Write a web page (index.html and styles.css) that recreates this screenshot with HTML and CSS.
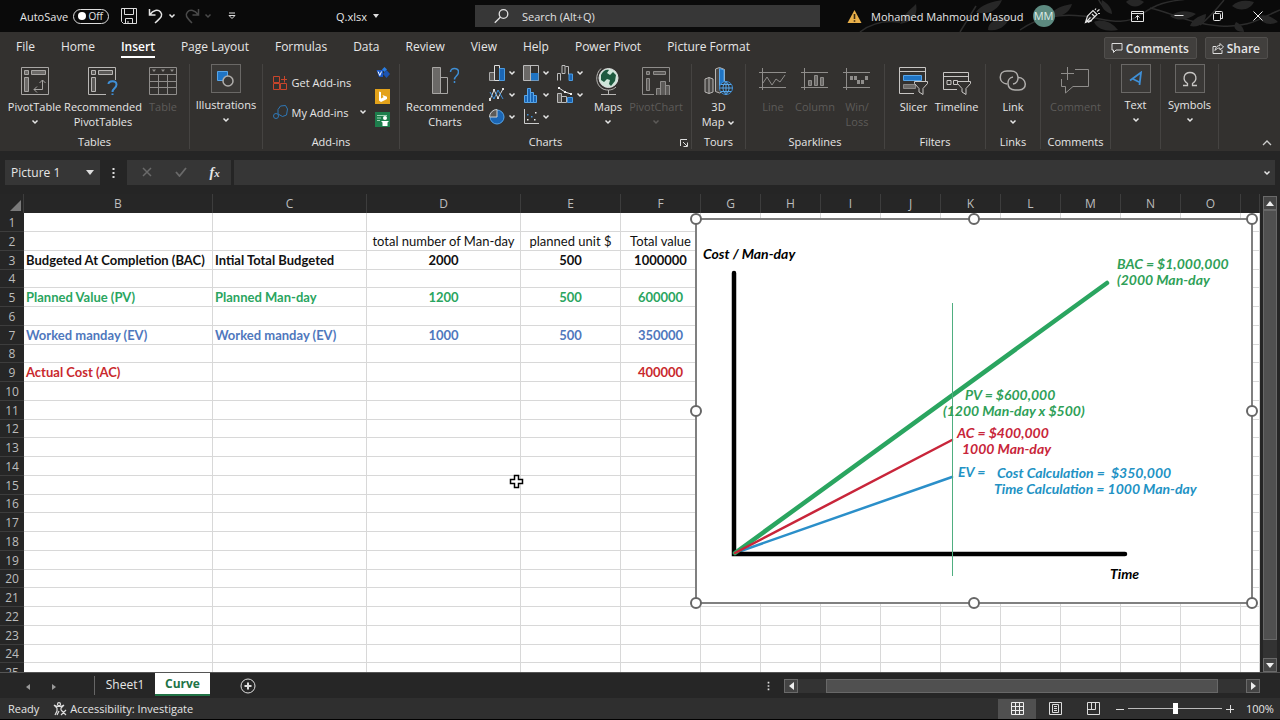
FILE: index.html
```html
<!DOCTYPE html>
<html lang="en">
<head>
    <meta charset="UTF-8">
    <meta name="viewport" content="width=device-width, initial-scale=1.0">
    <title>Q.xlsx - Excel</title>
    <link rel="stylesheet" href="styles.css">
</head>
<body>
    <svg class="defs" aria-hidden="true">
        <symbol id="chev" viewBox="0 0 8 6"><path d="M1.500 1.500 4 4l2.500-2.500" fill="none" stroke="currentColor" stroke-width="1.500"/></symbol>
        <symbol id="funnel" viewBox="0 0 14 14"><path d="M.5.5h13v2L9 7.500v6L5 11V7.500L.5 2.500z" fill="#33312f" stroke="#c8c6c4"/></symbol>
    </svg>

    <header class="titlebar">
        <svg class="foliage" viewBox="0 0 440 32" aria-hidden="true">
            <g fill="none" stroke="#2c2c2c" stroke-width="1.500">
                <path d="M180 30c20-14 40-16 62-14s40 12 60-2 30-12 50-16M270 12c-6-4-10-8-12-14M310 8c20 4 40 16 70 18s40-8 60-16"/>
                <path d="M360 25c10-8 20-20 24-25M20 32c10-8 24-12 40-10M120 32l16-26"/>
            </g>
            <g fill="#272727">
                <path d="M60 24c4-10 10-14 16-20 2 10-2 18-16 20zM136 12c6-8 16-10 26-12-4 10-14 16-26 12zM148 30c0-8 8-12 22-14-2 8-10 16-22 14zM210 16c4-8 12-10 22-12-2 8-10 14-22 12zM254 22c8-4 18 0 24 8-10 2-20 0-24-8z"/>
                <path d="M262 0c6 4 10 8 10 14-8-2-12-8-10-14zM286 2c4-4 12-4 18 0-6 6-12 6-18 0zM330 16c8-6 18-6 26-2-8 6-18 8-26 2zM350 26c2-6 8-10 16-12 0 8-6 14-16 12zM392 6c6-6 14-6 22-4-4 8-14 10-22 4zM396 22c4 2 8 6 8 10-8 0-12-4-8-10zM418 16c6-2 14 0 20 6-8 4-16 2-20-6z"/>
            </g>
        </svg>
        <div class="title-left">
            <label class="autosave"><span>AutoSave</span><input type="checkbox"><span class="toggle"><i></i>Off</span></label>
            <button class="t-btn" aria-label="Save"><svg width="16" height="16" viewBox="0 0 16 16" fill="none" stroke="#ddd"><path d="M.5.5h15v15H2.500l-2-2zM3.500.5v6h9v-6M4.500 15.500v-5h7v5M7 13v2"/></svg></button>
            <button class="t-btn undo" aria-label="Undo"><svg width="16" height="16" viewBox="0 0 16 16" fill="none" stroke="#e4e4e4" stroke-width="1.500"><path d="M1.500 1v6h6M2 6.500C5 2 10 1 12.500 4s1.500 5-5.500 11"/></svg><svg class="chev"><use href="#chev"/></svg></button>
            <button class="t-btn redo" aria-label="Redo" disabled><svg width="16" height="16" viewBox="0 0 16 16" fill="none" stroke="#4a4a4a" stroke-width="1.500"><path d="M14.500 1v6h-6M14 6.500C11 2 6 1 3.500 4s-1.500 5 4.500 11"/></svg><svg class="chev"><use href="#chev"/></svg></button>
            <button class="t-btn" aria-label="Customize Quick Access Toolbar"><svg width="8" height="8" viewBox="0 0 8 8"><path d="M1 1h6" stroke="#ddd"/><path d="M1 3.500h6l-3 3z" fill="none" stroke="#ddd"/></svg></button>
            <button class="file-name">Q.xlsx <svg width="6" height="4" viewBox="0 0 6 4"><path d="M0 0h6L3 4z" fill="#ddd"/></svg></button>
        </div>
        <div class="search">
            <svg width="15" height="15" viewBox="0 0 15 15" fill="none" stroke="#e0e0e0" stroke-width="1.300"><circle cx="9.500" cy="5" r="4.300"/><path d="M6.500 8 .8 13.800"/></svg>
            <input type="text" placeholder="Search (Alt+Q)" aria-label="Search">
        </div>
        <div class="title-right">
            <div class="account">
                <svg width="15" height="15" viewBox="0 0 15 15"><path d="M7.500 1 14.500 14H.5z" fill="#e9b04a"/><path d="M7.500 5v5M7.500 11.200v1.500" stroke="#3a2a10" stroke-width="1.600"/></svg>
                <span>Mohamed Mahmoud Masoud</span>
                <span class="avatar">MM</span>
            </div>
            <button class="t-btn" aria-label="Pen"><svg width="17" height="16" viewBox="0 0 17 16" fill="none" stroke="#e4e4e4" stroke-width="1.200"><path d="M1.500 14.500 3.500 8 9 2.500l4 4L7.500 12zM1.500 14.500l5-5M8 6l3 3M11 2l1-1.500M13 3.500l2.500-2M14 5.500h2M4 14.500l4-2"/></svg></button>
            <button class="t-btn" aria-label="Ribbon Display Options"><svg width="13" height="11" viewBox="0 0 13 11" fill="none" stroke="#e4e4e4"><path d="M.5.5h12v10H.5zM.5 2.500h12M6.500 9V4.500M4.500 6.500l2-2 2 2"/></svg></button>
            <button class="t-btn" aria-label="Minimize"><svg width="10" height="10" viewBox="0 0 10 10"><path d="M.5 4.500h9" stroke="#e4e4e4"/></svg></button>
            <button class="t-btn" aria-label="Restore Down"><svg width="10" height="10" viewBox="0 0 10 10" fill="none" stroke="#e4e4e4"><rect x=".5" y="2.500" width="7" height="7" rx="1"/><path d="M2.500 2.500V.5h6q1 0 1 1v6h-2"/></svg></button>
            <button class="t-btn" aria-label="Close"><svg width="10" height="10" viewBox="0 0 10 10"><path d="m.5.5 9 9m0-9-9 9" stroke="#f0f0f0"/></svg></button>
        </div>
    </header>

    <nav class="tabs">
        <a href="#">File</a>
        <a href="#">Home</a>
        <a href="#" class="active">Insert</a>
        <a href="#">Page Layout</a>
        <a href="#">Formulas</a>
        <a href="#">Data</a>
        <a href="#">Review</a>
        <a href="#">View</a>
        <a href="#">Help</a>
        <a href="#">Power Pivot</a>
        <a href="#">Picture Format</a>
        <div class="tab-actions">
            <button><svg width="12" height="12" viewBox="0 0 12 12" fill="none" stroke="#ddd"><path d="M1 1.500h10v6.500H5L2.500 10.500V8H1z"/></svg>Comments</button>
            <button><svg width="12" height="12" viewBox="0 0 12 12" fill="none" stroke="#ddd"><path d="M4 4.500H1v7h9V8M3 8.500C3.500 5 5.500 3.500 8 3.500v-2L11.500 5 8 8V6C6 6 4.500 6.500 3 8.500z"/></svg>Share</button>
        </div>
    </nav>

    <section class="ribbon">
        <div class="group g-tables">
            <div class="tools">
                <button class="big b-pivot">
                    <svg width="28" height="28" viewBox="0 0 28 28" fill="none" stroke="#a8a6a4"><path d="M.5.5h27v27H.5z"/><path d="M3.500 3.500h4v4h-4zM10.500 3.500h14v4h-14zM3.500 10.500h4v14h-4z" fill="#6b6967"/><path d="M13 22.500h8.500V13M16 19.500l-3 3 3 3M18.500 16l3-3 3 3"/></svg>
                    <span>PivotTable</span><svg class="chev"><use href="#chev"/></svg>
                </button>
                <button class="big b-rec">
                    <svg width="30" height="28" viewBox="0 0 30 28" fill="none" stroke="#b8b6b4"><path d="M18 27.500H.5V.5h27V13"/><path d="M3.500 3.500h4v4h-4zM10.500 3.500h14v4h-14zM3.500 10.500h4v14h-4z" fill="#5a5856"/><path d="M20.500 17c0-3 8-4.500 8 .5 0 4-4 3.500-4 7.500M24.500 26.500V28" stroke="#3f8fd6" stroke-width="2"/></svg>
                    <span>Recommended<br>PivotTables</span>
                </button>
                <button class="big b-table" disabled>
                    <svg width="28" height="28" viewBox="0 0 28 28" fill="none" stroke="#8f8d8b"><path d="M.5.5h27v27H.5zM.5 7.500h27M.5 14.500h27M.5 20.500h27M9.500 7.500v20M18.500 7.500v20"/><path d="M3 2.500h4L5 5zM12 2.500h4L14 5zM21 2.500h4L23 5z" fill="#8f8d8b" stroke="none"/></svg>
                    <span>Table</span>
                </button>
            </div>
            <h2>Tables</h2>
        </div>
        <div class="group g-illus">
            <div class="tools">
                <button class="big boxed">
                    <span class="box"><svg width="17" height="17" viewBox="0 0 17 17"><path d="M.5 1.500h10v9H.5z" fill="#1f74c4" stroke="#57a5e8"/><circle cx="11" cy="11" r="5" fill="#3a3836" stroke="#b0aeac" stroke-width="1.500"/></svg></span>
                    <span>Illustrations</span><svg class="chev"><use href="#chev"/></svg>
                </button>
            </div>
        </div>
        <div class="group g-addins">
            <div class="tools">
                <div class="addin-list">
                    <button><svg width="15" height="15" viewBox="0 0 15 15" fill="none" stroke="#c8452b"><path d="M.5 1.500h6v6h-6zM.5 8.500h6v6h-6zM7.500 8.500h6v6h-6zM8 4.500h6M11.500 1v6.500"/></svg>Get Add-ins</button>
                    <button><svg width="15" height="15" viewBox="0 0 15 15" fill="none" stroke="#2f78b7"><path d="M5 4.500 7.500 1l5-.5 2 3.500-1 6-4 1.500L5 9z"/><circle cx="3" cy="11" r="2.500"/></svg>My Add-ins<svg class="chev"><use href="#chev"/></svg></button>
                </div>
                <div class="mini-list">
                    <button aria-label="Visio Data Visualizer"><svg width="15" height="15" viewBox="0 0 15 15"><path d="M7 3.500 9.500 1 12 3.500 9.500 6z" fill="#2a7de1"/><path d="M8 8l3.500-4L15 8l-3.500 4z" fill="#1c54b2"/><path d="M1.500 4H8v7H4z" fill="#1a58c8"/><path d="m3 5.500 1.800 4L6.500 5.500" fill="none" stroke="#fff"/></svg></button>
                    <button aria-label="Bing Maps"><svg width="15" height="15" viewBox="0 0 15 15"><path d="M0 0h15v15H0z" fill="#e3a21a"/><path d="M4 2.500 6 3.200v6.300l2.500-1.300L7.500 6l4.500 1.700v2.300L6 13l-2-1.500z" fill="#fff"/></svg></button>
                    <button aria-label="People Graph"><svg width="15" height="15" viewBox="0 0 15 15"><path d="M0 0h15v15H0z" fill="#1d7e4c"/><path d="M2 3.500h10M2 6h4M2 8.500h3" stroke="#9fd3b5"/><circle cx="10" cy="6" r="2" fill="#fff"/><path d="M6 9h8l-1.500 1.500V14H7.500v-3.500z" fill="#fff"/></svg></button>
                </div>
            </div>
            <h2>Add-ins</h2>
        </div>
        <div class="group g-charts">
            <div class="tools">
                <button class="big b-recchart">
                    <svg width="28" height="28" viewBox="0 0 28 28" fill="none" stroke="#a8a6a4"><path d="M1.500.5h8v26h-8z" fill="#6b6967"/><path d="M9.500 10.500h7v16h-7z"/><path d="M19.500 5c0-5 8-4.500 8 0 0 4-4 4-4 7.500M23.500 14v2" stroke="#3f8fd6" stroke-width="1.500"/></svg>
                    <span>Recommended<br>Charts</span>
                </button>
                <div class="chart-grid">
                    <button aria-label="Column or Bar Chart"><svg width="16" height="16" viewBox="0 0 16 16"><path d="M.5 7.500h5v8h-5z" fill="#5c5a58" stroke="#aaa"/><path d="M5.500.5h5v15h-5z" fill="none" stroke="#ddd"/><path d="M10.500 3.500h5v12h-5z" fill="#1b66b5" stroke="#4a9ae0"/></svg><svg class="chev"><use href="#chev"/></svg></button>
                    <button aria-label="Hierarchy Chart"><svg width="16" height="16" viewBox="0 0 16 16"><path d="M.5.500h15v15H.5z" fill="none" stroke="#bbb"/><path d="M1 1h6v14H1z" fill="#6b6967"/><path d="M7.500.500v15" stroke="#bbb"/><path d="M8 8h7.500v7.500H8z" fill="#1f74c4"/></svg><svg class="chev"><use href="#chev"/></svg></button>
                    <button aria-label="Waterfall Chart"><svg width="16" height="16" viewBox="0 0 16 16" fill="none" stroke="#bbb"><path d="M.5 15.500v-7h3v7M5 8.500v-8h3v8zM8.500 1.500h3v8"/><path d="M12 9h3.500v6.500H12z" fill="#1b66b5" stroke="#4a9ae0"/></svg><svg class="chev"><use href="#chev"/></svg></button>
                    <button aria-label="Line Chart"><svg width="16" height="16" viewBox="0 0 16 16" fill="none"><path d="m1 13 4-10 4 8 5-9" stroke="#ddd"/><path d="m1 5 4 7 4-9 5 9" stroke="#3f8fd6"/><path d="M0 11h2v3H0zM4 2h2v2H4zM8 10h2v2H8zM13 1h2v2h-2z" fill="#ddd"/></svg><svg class="chev"><use href="#chev"/></svg></button>
                    <button aria-label="Statistic Chart"><svg width="16" height="16" viewBox="0 0 16 16" fill="#1b66b5" stroke="#57a5e8"><path d="M1.500 8.500h3v7h-3zM4.500 1.500h3v14h-3zM7.500 5.500h3v10h-3zM10.500 8.500h3v7h-3z"/></svg><svg class="chev"><use href="#chev"/></svg></button>
                    <button aria-label="Combo Chart"><svg width="16" height="16" viewBox="0 0 16 16" fill="none" stroke="#bbb"><path d="M.5 6.500h4v9h-4z" fill="#5c5a58"/><path d="M4.500 9.500h5v6h-5z"/><path d="M10.500 10.500h5v5h-5z" fill="#1b66b5" stroke="#4a9ae0"/><path d="m2 1 6 4 6 2" stroke="#eee"/><path d="M1 0h2v2H1zM7 4h2v2H7zM13 6h2v2h-2z" fill="#eee" stroke="none"/></svg><svg class="chev"><use href="#chev"/></svg></button>
                    <button aria-label="Pie Chart"><svg width="16" height="16" viewBox="0 0 16 16"><circle cx="8" cy="8" r="7" fill="#1b66b5" stroke="#57a5e8"/><path d="M8 8V.5A7.500 7.500 0 0 0 .5 8z" fill="#5c5a58" stroke="#ccc"/></svg><svg class="chev"><use href="#chev"/></svg></button>
                    <button aria-label="Scatter Chart"><svg width="16" height="16" viewBox="0 0 16 16"><path d="M1.500 0v14.500H16" fill="none" stroke="#ccc"/><path d="M4 10h1.500v1.500H4zM11 10h1.500v1.500H11zM12 3h1.500v1.500H12z" fill="#eee"/><path d="M4 5h1.500v1.500H4zM8 7h1.500v1.500H8z" fill="#3f8fd6"/></svg><svg class="chev"><use href="#chev"/></svg></button>
                </div>
                <button class="big b-maps">
                    <svg width="24" height="28" viewBox="0 0 24 28" fill="none" stroke="#b8b6b4"><circle cx="12.500" cy="11" r="9.500" fill="#cfe6da" stroke="#e0e0e0"/><path d="M5 8c2-5 6-6 8-5l-2 3 3 2 3-3 3 3-1 6-4 5-2-2 1-4-3-1-3 3-3-2z" fill="#1e5a3f" stroke="none"/><path d="M5 1.500C-1 7-1 18 7 22c5 2 10 1 13-2M12.500 23v4M5 27.500h15"/></svg>
                    <span>Maps</span><svg class="chev"><use href="#chev"/></svg>
                </button>
                <button class="big b-pchart" disabled>
                    <svg width="28" height="28" viewBox="0 0 28 28" fill="none" stroke="#8f8d8b"><path d="M12 27.500H.5V.5h27V15"/><path d="M4.500 4.500h3v3h-3zM11.500 4.500h12v3h-12zM4.500 11.500h3v12h-3z" fill="#5c5a58"/><path d="M14.500 21.500h4v7h-4zM18.500 14.500h5v14h-5zM23.500 18.500h4v10h-4z" fill="#5c5a58"/></svg>
                    <span>PivotChart</span><svg class="chev"><use href="#chev"/></svg>
                </button>
            </div>
            <h2>Charts</h2>
            <button class="launcher" aria-label="Charts options"><svg width="8" height="8" viewBox="0 0 8 8" fill="none" stroke="#ddd"><path d="M.5 7V.5H7M3 3l4 4M7.500 3.500v4h-4"/></svg></button>
        </div>
        <div class="group g-tours">
            <div class="tools">
                <button class="big">
                    <svg width="30" height="28" viewBox="0 0 30 28" fill="none" stroke="#b8b6b4"><path d="m1 12 4-1.500 4 1.500v13l-4 1.500L1 25zM5 10.500v16" fill="#4a4846"/><path d="m11.500 2 4-1.500 5 2V24l-5 2-4-1.500z" fill="#4a4846"/><path d="M15.500 1.500 20 3v14l-4.500 3z" fill="#1f74c4" stroke="#57a5e8"/><circle cx="22" cy="21" r="6.500" fill="#2d2c2a" stroke="#3f8fd6"/><path d="M15.500 21h13M22 14.500v13M17 17.500h10M17 24.500h10M22 14.500c-4 3-4 10 0 13M22 14.500c4 3 4 10 0 13" stroke="#57a5e8"/></svg>
                    <span>3D<br>Map <svg class="chev"><use href="#chev"/></svg></span>
                </button>
            </div>
            <h2>Tours</h2>
        </div>
        <div class="group g-spark">
            <div class="tools">
                <button class="big" disabled>
                    <svg width="28" height="28" viewBox="0 0 28 28" fill="none" stroke="#8f8d8b"><path d="M0 5.500h27M0 20.500h27M3.500 1v22M4 16l4-6 5 8 4-6 4 3 5-7"/></svg>
                    <span>Line</span>
                </button>
                <button class="big" disabled>
                    <svg width="28" height="28" viewBox="0 0 28 28" fill="none" stroke="#8f8d8b"><path d="M0 5.500h27M0 20.500h27M3.500 1v22"/><path d="M7.500 13.500h3v5h-3zM13.500 8.500h3v10h-3zM19.500 10.500h3v8h-3z" fill="#6b6967"/></svg>
                    <span>Column</span>
                </button>
                <button class="big" disabled>
                    <svg width="28" height="28" viewBox="0 0 28 28" fill="none" stroke="#8f8d8b"><path d="M0 5.500h27M0 20.500h27M3.500 1v22"/><path d="M7 9h3v4H7zM11 9h3v4h-3zM14 13h3v4h-3zM18 13h3v4h-3zM22 9h3v4h-3z" fill="#8f8d8b" stroke="none"/></svg>
                    <span>Win/<br>Loss</span>
                </button>
            </div>
            <h2>Sparklines</h2>
        </div>
        <div class="group g-filters">
            <div class="tools">
                <button class="big">
                    <svg width="29" height="28" viewBox="0 0 29 28" fill="none" stroke="#c8c6c4"><path d="M15 26.500H.5V.5h26V14M.5 4.500h26"/><path d="M4.500 8.500h18v5h-18z" fill="#1f74c4" stroke="#57a5e8"/><path d="M4.500 17.500h12v4h-12z" fill="#6b6967" stroke="#8a8886"/><use href="#funnel" x="15" y="14" width="14" height="14"/></svg>
                    <span>Slicer</span>
                </button>
                <button class="big">
                    <svg width="28" height="28" viewBox="0 0 28 28" fill="none" stroke="#c8c6c4"><path d="M14 22.500H.5v-17h25V14M.5 9.500h25M4 13.500h4v4H4zM10.500 13.500h4v4h-4z"/><use href="#funnel" x="14" y="14" width="14" height="14"/></svg>
                    <span>Timeline</span>
                </button>
            </div>
            <h2>Filters</h2>
        </div>
        <div class="group g-links">
            <div class="tools">
                <button class="big">
                    <svg width="28" height="28" viewBox="0 0 28 28" fill="none" stroke="#b0aeac" stroke-width="1.500"><path d="M8 17C-1 16-1 4 8 4h4c9 0 9 12 2 13"/><path d="M19 10.500c9 0 10 12.500 1 12.500h-4c-9 0-9-12-2-13"/></svg>
                    <span>Link</span><svg class="chev"><use href="#chev"/></svg>
                </button>
            </div>
            <h2>Links</h2>
        </div>
        <div class="group g-comments">
            <div class="tools">
                <button class="big" disabled>
                    <svg width="28" height="28" viewBox="0 0 28 28" fill="none" stroke="#8f8d8b"><path d="M14 2.500h13.500v17H12L4.500 26v-6.500H.5V12M0 6.500h13M6.500 0v13"/></svg>
                    <span>Comment</span>
                </button>
            </div>
            <h2>Comments</h2>
        </div>
        <div class="group g-text">
            <div class="tools">
                <button class="big boxed">
                    <span class="box"><svg width="14" height="16" viewBox="0 0 14 16" fill="none" stroke="#3f8fd6" stroke-width="1.800"><path d="M1 9.500 12 1.500 10.500 14M4 8l7 3.500"/></svg></span>
                    <span>Text</span><svg class="chev"><use href="#chev"/></svg>
                </button>
            </div>
        </div>
        <div class="group g-symbols">
            <div class="tools">
                <button class="big boxed">
                    <span class="box"><svg width="16" height="16" viewBox="0 0 16 16" fill="none" stroke="#c8c6c4" stroke-width="1.300"><path d="M1 14.500h4.500v-2C0 9 1.500 1.500 8 1.500s8 7.500 2.500 11v2H15"/></svg></span>
                    <span>Symbols</span><svg class="chev"><use href="#chev"/></svg>
                </button>
            </div>
        </div>
        <button class="collapse" aria-label="Collapse the Ribbon"><svg width="10" height="6" viewBox="0 0 10 6"><path d="m1 5 4-4 4 4" fill="none" stroke="#ccc" stroke-width="1.300"/></svg></button>
    </section>

    <div class="formula-bar">
        <div class="name-box">
            <input type="text" value="Picture 1" aria-label="Name Box">
            <svg width="8" height="5" viewBox="0 0 8 5"><path d="M0 0h8L4 5z" fill="#ddd"/></svg>
        </div>
        <svg class="dots" width="3" height="12" viewBox="0 0 3 12"><path d="M.5 1h2v2h-2zM.5 5h2v2h-2zM.5 9h2v2h-2z" fill="#ddd"/></svg>
        <div class="fx-buttons">
            <button aria-label="Cancel" disabled><svg width="10" height="10" viewBox="0 0 10 10"><path d="m1 1 8 8m0-8L1 9" stroke="#6a6a6a" stroke-width="1.500"/></svg></button>
            <button aria-label="Enter" disabled><svg width="12" height="10" viewBox="0 0 12 10"><path d="m1 5 3.500 4L11 1" fill="none" stroke="#6a6a6a" stroke-width="1.800"/></svg></button>
            <button class="fx" aria-label="Insert Function">f<small>x</small></button>
        </div>
        <div class="fx-input">
            <input type="text" aria-label="Formula Bar">
            <svg class="chev"><use href="#chev"/></svg>
        </div>
    </div>

    <main class="workspace">
        <div class="sheet">
            <table>
                <colgroup>
                    <col class="c-head"><col class="c-b"><col class="c-c"><col class="c-d"><col class="c-e"><col class="c-f">
                    <col class="c-std" span="9"><col>
                </colgroup>
                <thead>
                    <tr>
                        <th class="corner"><svg width="11" height="11" viewBox="0 0 11 11"><path d="M11 0v11H0z" fill="#7a7a7a"/></svg></th>
                        <th>B</th><th>C</th><th>D</th><th>E</th><th>F</th><th>G</th><th>H</th><th>I</th>
                        <th>J</th><th>K</th><th>L</th><th>M</th><th>N</th><th>O</th><th></th>
                    </tr>
                </thead>
                <tbody id="rows"></tbody>
            </table>
            <svg class="picture" width="556" height="384" viewBox="0 0 556 384" role="img" aria-label="Cost / Man-day over Time">
                <rect width="556" height="384" class="frame"/>
                <g fill="none" stroke-linecap="round">
                    <path d="M39 334 256 258" stroke="#2b8fc9" stroke-width="2.500"/>
                    <path d="M38 54v281h391" stroke="#000" stroke-width="4.500"/>
                    <path d="M39 334 411 64" stroke="#2aa560" stroke-width="4.500"/>
                    <path d="M39 334 256 221" stroke="#c8253a" stroke-width="2.500"/>
                </g>
                <path d="M256.500 84v273" stroke="#4fae80"/>
                <g>
                    <text x="7" y="40">Cost / Man-day</text>
                    <text x="414" y="360">Time</text>
                </g>
                <g class="green">
                    <text x="421" y="50">BAC = $1,000,000</text>
                    <text x="421" y="66">(2000 Man-day</text>
                    <text x="269" y="181">PV = $600,000</text>
                    <text x="247" y="197">(1200 Man-day x $500)</text>
                </g>
                <g class="red">
                    <text x="261" y="219">AC = $400,000</text>
                    <text x="266" y="235">1000 Man-day</text>
                </g>
                <g class="blue">
                    <text x="262" y="258">EV =</text>
                    <text x="301" y="259">Cost Calculation =&#160; $350,000</text>
                    <text x="298" y="275">Time Calculation = 1000 Man-day</text>
                </g>
                <g class="handles">
                    <circle cx="0" cy="0" r="5"/><circle cx="278" cy="0" r="5"/><circle cx="556" cy="0" r="5"/>
                    <circle cx="0" cy="192" r="5"/><circle cx="556" cy="192" r="5"/>
                    <circle cx="0" cy="384" r="5"/><circle cx="278" cy="384" r="5"/><circle cx="556" cy="384" r="5"/>
                </g>
            </svg>
            <svg class="cursor" width="15" height="15" viewBox="0 0 15 15"><path d="M5.500 1.500h4v4h4v4h-4v4h-4v-4h-4v-4h4z" fill="#fff" stroke="#000" stroke-width="1.500"/></svg>
        </div>
        <div class="vscroll">
            <button aria-label="Scroll up"><svg width="8" height="5" viewBox="0 0 8 5"><path d="M4 0l4 5H0z" fill="#eee"/></svg></button>
            <div class="track"><div class="thumb"></div></div>
            <button aria-label="Scroll down"><svg width="8" height="5" viewBox="0 0 8 5"><path d="M0 0h8L4 5z" fill="#eee"/></svg></button>
        </div>
    </main>

    <div class="sheet-bar">
        <div class="sheet-nav">
            <button aria-label="Previous sheet"><svg width="4" height="6" viewBox="0 0 4 6"><path d="M4 0v6L0 3z" fill="#999"/></svg></button>
            <button aria-label="Next sheet"><svg width="4" height="6" viewBox="0 0 4 6"><path d="M0 0v6l4-3z" fill="#999"/></svg></button>
        </div>
        <button class="sheet-tab">Sheet1</button>
        <button class="sheet-tab current">Curve</button>
        <button class="add-sheet" aria-label="New sheet"><svg width="16" height="16" viewBox="0 0 16 16" fill="none" stroke="#ddd"><circle cx="8" cy="8" r="7"/><path d="M8 4.500v7M4.500 8h7" stroke-width="2"/></svg></button>
        <div class="hscroll">
            <svg class="dots" width="3" height="10" viewBox="0 0 3 12"><path d="M.5 1h2v2h-2zM.5 5h2v2h-2zM.5 9h2v2h-2z" fill="#ddd"/></svg>
            <button aria-label="Scroll left"><svg width="5" height="8" viewBox="0 0 5 8"><path d="M5 0v8L0 4z" fill="#eee"/></svg></button>
            <div class="track"><div class="thumb"></div></div>
            <button aria-label="Scroll right"><svg width="5" height="8" viewBox="0 0 5 8"><path d="M0 0v8l5-4z" fill="#eee"/></svg></button>
        </div>
    </div>

    <footer class="status">
        <span>Ready</span>
        <button class="access"><svg width="14" height="14" viewBox="0 0 14 14" fill="none" stroke="#ddd" stroke-width="1.200"><circle cx="6" cy="2.200" r="1.500"/><path d="M1 3c2 2 8 2 10 0M1 3l3 3v3l-2 4M11 3 8 6v2M6 9l-2 4M8 8l5 5M13 8l-5 5"/></svg>Accessibility: Investigate</button>
        <div class="views">
            <button class="on" aria-label="Normal"><svg width="13" height="13" viewBox="0 0 13 13" fill="none" stroke="#eee"><path d="M.5.5h12v12H.5zM.5 4.500h12M.5 8.500h12M4.500.5v12M8.500.5v12"/></svg></button>
            <button aria-label="Page Layout"><svg width="13" height="13" viewBox="0 0 13 13" fill="none" stroke="#ddd"><path d="M.5.5h12v12H.5zM3.500 2.500h6v8h-6zM5 4.500h3M5 6.500h3M5 8.500h3"/></svg></button>
            <button aria-label="Page Break Preview"><svg width="13" height="13" viewBox="0 0 13 13" fill="none" stroke="#ddd"><path d="M.5.5h12v12H.5zM4.500.5v7M.5 7.500h8V.5"/></svg></button>
        </div>
        <button class="step" aria-label="Zoom out"><svg width="8" height="8" viewBox="0 0 8 8"><path d="M0 4.500h8" stroke="#ddd"/></svg></button>
        <input type="range" min="0" max="100" value="50" aria-label="Zoom">
        <button class="step" aria-label="Zoom in"><svg width="8" height="8" viewBox="0 0 8 8"><path d="M0 4.500h8M4.500 0v8" stroke="#ddd"/></svg></button>
        <span class="percent">100%</span>
    </footer>

    <script src="script.js"></script>
</body>
</html>
```
FILE: styles.css
```css
* {
    box-sizing: border-box;
}

body {
    margin: 0;
    height: 100vh;
    display: flex;
    flex-direction: column;
    overflow: hidden;
    background: #252525;
    color: #e6e6e6;
    font-family: "Open Sans", "Noto Sans", sans-serif;
    font-size: 12px;
}

button, input {
    font: inherit;
    color: inherit;
    background: none;
    border: none;
    padding: 0;
    margin: 0;
}

svg {
    flex: none;
}

.defs {
    position: absolute;
    width: 0;
    height: 0;
}

.chev {
    width: 8px;
    height: 6px;
}

/* title bar */
.titlebar {
    position: relative;
    height: 32px;
    display: grid;
    grid-template-columns: 475fr 345fr 460fr;
    align-items: center;
    background: #0a0a0a;
    font-size: 11px;
}

.foliage {
    position: absolute;
    right: 0;
    top: 0;
    width: 440px;
    height: 32px;
}

.title-left, .title-right {
    position: relative;
    display: flex;
    align-items: center;
}

.title-left {
    padding-left: 20px;
}

.t-btn {
    display: flex;
    align-items: center;
    gap: 4px;
}

.autosave {
    display: flex;
    align-items: center;
    gap: 5px;
    margin-right: 12px;
}

.autosave input {
    position: absolute;
    opacity: 0;
}

.toggle {
    display: flex;
    align-items: center;
    justify-content: space-between;
    width: 36px;
    height: 15px;
    padding: 0 5px 0 4px;
    border: 1px solid #ddd;
    border-radius: 8px;
    font-size: 10px;
}

.toggle i {
    width: 8px;
    height: 8px;
    border-radius: 50%;
    background: #fff;
}

.undo {
    margin-left: 11px;
}

.redo {
    margin: 0 16px 0 8px;
    color: #4a4a4a;
}

.file-name {
    display: flex;
    align-items: center;
    gap: 6px;
    margin: 0 96px 0 auto;
}

.search {
    display: flex;
    align-items: center;
    gap: 13px;
    height: 22px;
    padding-left: 19px;
    background: #373737;
}

.search input {
    flex: 1;
    min-width: 0;
    outline: none;
}

.search input::placeholder {
    color: #e0e0e0;
    opacity: 1;
}

.title-right {
    padding: 0 17px 0 27px;
    justify-content: space-between;
}

.account {
    display: flex;
    align-items: center;
    gap: 9px;
    white-space: nowrap;
}

.avatar {
    width: 22px;
    height: 22px;
    border-radius: 50%;
    background: #5d8a80;
    color: #dcebe6;
    line-height: 22px;
    text-align: center;
}

/* ribbon tabs */
.tabs {
    display: flex;
    align-items: center;
    gap: 26px;
    height: 30px;
    padding: 2px 12px 0 16px;
    background: #33312f;
}

.tabs a {
    color: #e6e6e6;
    text-decoration: none;
    line-height: 18px;
    white-space: nowrap;
    border-bottom: 2px solid transparent;
}

.tabs .active {
    color: #fff;
    font-weight: 600;
    border-color: #fff;
}

.tab-actions {
    display: flex;
    gap: 8px;
    margin-left: auto;
}

.tab-actions button {
    display: flex;
    align-items: center;
    gap: 3px;
    height: 22px;
    padding: 0 7px 0 6px;
    border: 1px solid #514f4d;
    border-radius: 2px;
    background: #413f3d;
    font-weight: 600;
}

/* ribbon */
.ribbon {
    position: relative;
    display: flex;
    height: 89px;
    padding: 2px 0;
    background: #33312f;
    font-size: 11px;
}

.group {
    position: relative;
    display: flex;
    flex-direction: column;
    border-right: 1px solid #454341;
}

.group h2 {
    margin: auto 0 0;
    font-size: 11px;
    font-weight: 400;
    line-height: 14px;
    text-align: center;
}

.tools {
    display: flex;
    justify-content: center;
}

.big {
    display: flex;
    flex-direction: column;
    align-items: center;
    padding-top: 3px;
    line-height: 15px;
    white-space: nowrap;
}

.big > span:not(.box) {
    margin-top: 4px;
}

.big > .chev {
    margin-top: 5px;
}

.big:disabled {
    color: #5d5b59;
}

.big.boxed {
    padding-top: 0;
}

.box {
    display: flex;
    align-items: center;
    justify-content: center;
    width: 30px;
    height: 29px;
    border: 1px solid #6a6866;
    background: #3a3836;
}

.g-tables { width: 190px; }
.g-illus { width: 73px; }
.g-addins { width: 137px; }
.g-charts { width: 292px; }
.g-tours { width: 54px; }
.g-spark { width: 139px; }
.g-filters { width: 101px; }
.g-links { width: 55px; }
.g-comments { width: 70px; }
.g-text { width: 50px; }
.g-symbols { width: 58px; }

.b-pivot { width: 53px; }
.b-rec { width: 84px; }
.b-table { width: 36px; }
.b-recchart { width: 82px; }
.b-maps { width: 34px; }
.b-pchart { width: 62px; }
.g-spark .big { width: 42px; }
.g-filters .big { width: 43px; }

.addin-list {
    display: flex;
    flex-direction: column;
    gap: 14px;
    width: 94px;
    padding-top: 10px;
}

.addin-list button {
    display: flex;
    align-items: center;
    gap: 4px;
    height: 16px;
    white-space: nowrap;
}

.addin-list .chev {
    margin-left: auto;
}

.mini-list {
    display: flex;
    flex-direction: column;
    gap: 8px;
    padding: 2px 0 0 8px;
}

.mini-list button {
    display: flex;
}

.chart-grid {
    display: grid;
    grid-template-columns: 34px 34px 34px;
    align-content: start;
    row-gap: 6px;
    padding: 1px 0 0 3px;
}

.chart-grid button {
    display: flex;
    align-items: center;
    gap: 3px;
}

.launcher {
    position: absolute;
    right: 3px;
    bottom: 2px;
    display: flex;
}

.collapse {
    align-self: flex-end;
    margin: 0 8px 0 auto;
}

/* formula bar */
.formula-bar {
    display: flex;
    align-items: center;
    height: 43px;
    padding: 0 5px;
}

.name-box, .fx-buttons, .fx-input {
    display: flex;
    align-items: center;
    height: 25px;
    background: #363636;
}

.name-box {
    width: 95px;
    padding: 0 6px;
}

.name-box input {
    flex: 1;
    min-width: 0;
}

.dots {
    margin: 0 12px;
}

.fx-buttons {
    width: 104px;
    justify-content: space-around;
    padding-left: 4px;
    margin-right: 3px;
}

.fx {
    font: italic bold 14px "Liberation Serif", serif;
}

.fx small {
    font-size: 11px;
}

.fx-input {
    flex: 1;
    padding-right: 4px;
}

.fx-input input {
    flex: 1;
}

/* worksheet */
.workspace {
    flex: 1;
    min-height: 0;
    display: flex;
}

.sheet {
    position: relative;
    flex: 1;
    min-width: 0;
    overflow: hidden;
    background: #fff;
}

table {
    width: 100%;
    table-layout: fixed;
    border-collapse: separate;
    border-spacing: 0;
    color: #111;
    font-family: Lato, "Open Sans", sans-serif;
    font-size: 13px;
}

.c-head { width: 24px; }
.c-b { width: 189px; }
.c-c { width: 154px; }
.c-d { width: 154px; }
.c-e { width: 100px; }
.c-f { width: 80px; }
.c-std { width: 60px; }

th {
    padding: 0;
    background: #262626;
    color: #bdbdbd;
    border-right: 1px solid #3d3d3d;
    font: 400 12px/17px "Open Sans", sans-serif;
    overflow: hidden;
}

thead th {
    height: 19px;
}

.corner svg {
    display: block;
    margin: 4px 2px 0 auto;
}

tbody th {
    border-bottom: 1px solid #3d3d3d;
    border-right: none;
}

tbody tr {
    height: 19px;
}

tbody tr:nth-child(4n) {
    height: 18px;
}

td {
    padding: 0 2px;
    line-height: 17px;
    border-right: 1px solid #d8d8d8;
    border-bottom: 1px solid #d8d8d8;
    white-space: nowrap;
    text-align: center;
}

td:nth-child(2), td:nth-child(3) {
    text-align: left;
}

.bold { font-weight: 700; }
.c-green { color: #2aa560; }
.c-blue { color: #4f78bd; }
.c-red { color: #c9292e; }

.picture {
    position: absolute;
    left: 696px;
    top: 25px;
    overflow: visible;
    font: italic 700 14px Lato, "Open Sans", sans-serif;
}

.frame {
    fill: #fff;
    stroke: #808080;
    stroke-width: 2;
}

.green { fill: #2f9f58; }
.red { fill: #c8253a; }
.blue { fill: #2292c4; }

.handles {
    fill: #fff;
    stroke: #666;
    stroke-width: 2;
}

.cursor {
    position: absolute;
    left: 509px;
    top: 280px;
}

/* scroll bars */
.vscroll {
    width: 14px;
    margin: 2px 3px 0;
    display: flex;
    flex-direction: column;
}

.vscroll button, .hscroll button {
    display: flex;
    align-items: center;
    justify-content: center;
    width: 14px;
    height: 14px;
    border: 1px solid #6a6a6a;
    background: #444;
}

.vscroll .track {
    flex: 1;
    padding-bottom: 18px;
    display: flex;
    background: #333;
}

.thumb {
    flex: 1;
    border: 1px solid #686868;
    background: #505050;
}

/* sheet tabs */
.sheet-bar {
    display: flex;
    height: 26px;
    background: #262626;
    border-top: 1px solid #555;
}

.sheet-nav {
    display: flex;
    align-items: center;
    gap: 22px;
    width: 95px;
    padding-left: 26px;
    margin: 3px 0;
    border-right: 1px solid #666;
}

.sheet-tab {
    width: 60px;
    height: 23px;
}

.sheet-tab.current {
    width: 55px;
    background: #fff;
    color: #217346;
    font-weight: 700;
    border-bottom: 2px solid #217346;
}

.add-sheet {
    display: flex;
    align-items: center;
    margin-left: 30px;
}

.hscroll {
    display: flex;
    align-items: center;
    width: 500px;
    margin: 0 20px 0 auto;
}

.hscroll .dots {
    margin: 0 14px 0 7px;
}

.hscroll .track {
    flex: 1;
    height: 14px;
    padding: 0 28px;
    display: flex;
    background: #333;
}

/* status bar */
.status {
    display: flex;
    align-items: center;
    height: 22px;
    padding: 0 8px;
    background: #2f2f2f;
    border-bottom: 1px solid #000;
    font-size: 11px;
}

.access {
    display: flex;
    align-items: center;
    gap: 3px;
    margin-left: 14px;
}

.views {
    display: flex;
    margin-left: auto;
}

.views button {
    display: flex;
    align-items: center;
    justify-content: center;
    width: 38px;
    height: 20px;
}

.views .on {
    background: #505050;
}

.step {
    display: flex;
    margin: 0 4px;
}

.status input {
    width: 94px;
    height: 14px;
    -webkit-appearance: none;
    appearance: none;
    background: linear-gradient(#bbb, #bbb) center / 100% 1px no-repeat;
}

.status input::-webkit-slider-thumb {
    -webkit-appearance: none;
    width: 5px;
    height: 11px;
    background: #fff;
}

.percent {
    width: 26px;
    margin-left: 8px;
    white-space: nowrap;
}
```
FILE: script.js
```js
// cell contents by row number, columns B to F
const cells = {
    2: { values: ['', '', 'total number of Man-day', 'planned unit $', 'Total value'], style: '' },
    3: { values: ['Budgeted At Completion (BAC)', 'Intial Total Budgeted', '2000', '500', '1000000'], style: 'bold' },
    5: { values: ['Planned Value (PV)', 'Planned Man-day', '1200', '500', '600000'], style: 'bold c-green' },
    7: { values: ['Worked manday (EV)', 'Worked manday (EV)', '1000', '500', '350000'], style: 'bold c-blue' },
    9: { values: ['Actual Cost (AC)', '', '', '', '400000'], style: 'bold c-red' }
};
const rowCount = 25;
const columnCount = 15;

const tbody = document.getElementById('rows');
for (let r = 1; r <= rowCount; r++) {
    const tr = document.createElement('tr');
    const th = document.createElement('th');
    th.textContent = r;
    tr.appendChild(th);
    for (let c = 0; c < columnCount; c++) {
        const td = document.createElement('td');
        if (cells[r] && cells[r].values[c]) {
            td.textContent = cells[r].values[c];
            td.className = cells[r].style;
        }
        tr.appendChild(td);
    }
    tbody.appendChild(tr);
}
```
